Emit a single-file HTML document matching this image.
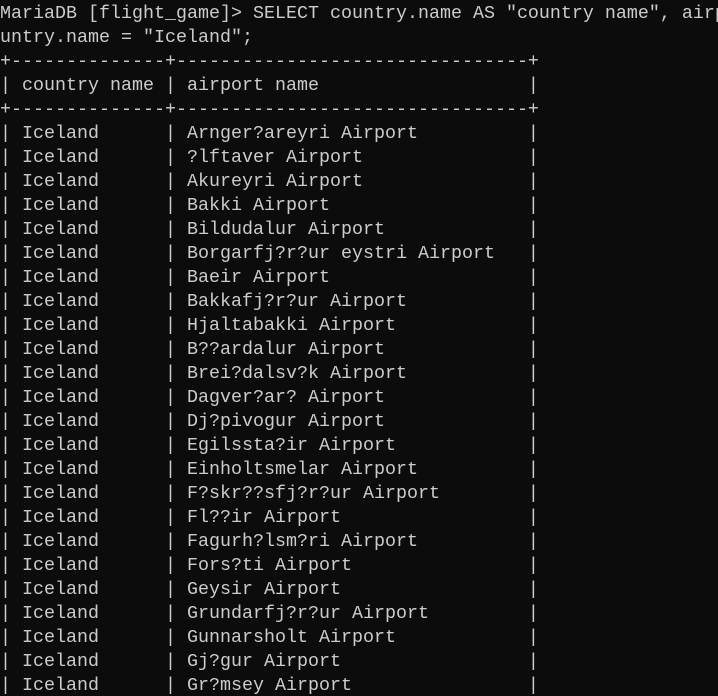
<!DOCTYPE html><html><head><style>
html,body{margin:0;background:#0c0c0c;width:718px;height:696px;overflow:hidden}
pre{margin:0;padding:2px 0 0 0;font-family:"Liberation Mono",monospace;font-size:18.33px;line-height:24px;color:#cccccc;white-space:pre}
</style></head><body><pre>MariaDB [flight_game]&gt; SELECT country.name AS "country name", airp
untry.name = "Iceland";
+--------------+--------------------------------+
| country name | airport name                   |
+--------------+--------------------------------+
| Iceland      | Arnger?areyri Airport          |
| Iceland      | ?lftaver Airport               |
| Iceland      | Akureyri Airport               |
| Iceland      | Bakki Airport                  |
| Iceland      | Bildudalur Airport             |
| Iceland      | Borgarfj?r?ur eystri Airport   |
| Iceland      | Baeir Airport                  |
| Iceland      | Bakkafj?r?ur Airport           |
| Iceland      | Hjaltabakki Airport            |
| Iceland      | B??ardalur Airport             |
| Iceland      | Brei?dalsv?k Airport           |
| Iceland      | Dagver?ar? Airport             |
| Iceland      | Dj?pivogur Airport             |
| Iceland      | Egilssta?ir Airport            |
| Iceland      | Einholtsmelar Airport          |
| Iceland      | F?skr??sfj?r?ur Airport        |
| Iceland      | Fl??ir Airport                 |
| Iceland      | Fagurh?lsm?ri Airport          |
| Iceland      | Fors?ti Airport                |
| Iceland      | Geysir Airport                 |
| Iceland      | Grundarfj?r?ur Airport         |
| Iceland      | Gunnarsholt Airport            |
| Iceland      | Gj?gur Airport                 |
| Iceland      | Gr?msey Airport                |
</pre></body></html>
